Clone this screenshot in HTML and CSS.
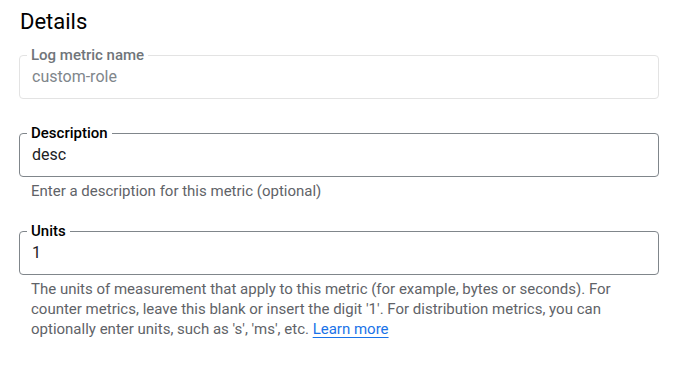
FILE: index.html
```html
<!DOCTYPE html>
<html lang="en">
<head>
    <meta charset="UTF-8">
    <title>Details</title>
    <link rel="stylesheet" href="styles.css">
</head>
<body>
    <div class="container">
        <h2>Details</h2>
        <fieldset class="field disabled">
            <legend>Log metric name</legend>
            <div class="value">custom-role</div>
        </fieldset>
        <fieldset class="field">
            <legend>Description</legend>
            <div class="value">desc</div>
        </fieldset>
        <div class="hint">Enter a description for this metric (optional)</div>
        <fieldset class="field">
            <legend>Units</legend>
            <div class="value">1</div>
        </fieldset>
        <div class="hint">The units of measurement that apply to this metric (for example, bytes or seconds). For counter metrics, leave this blank or insert the digit '1'. For distribution metrics, you can optionally enter units, such as 's', 'ms', etc. <a href="#">Learn more</a></div>
    </div>
</body>
</html>
```

FILE: styles.css
```css
body {
    margin: 0;
    padding: 0;
    font-family: Roboto, 'Noto Sans', Arial, sans-serif;
    color: #202124;
    background: #fff;
}
.container {
    width: 640px;
    padding: 8px 0 0 19px;
}
h2 {
    margin: 0 0 11px 1px;
    font-size: 22px;
    font-weight: 400;
    line-height: 28px;
    color: #000;
}
.field {
    margin: 0;
    padding: 0 12px 9px;
    border: 1px solid #80868b;
    border-radius: 4px;
    min-width: 0;
}
.field legend {
    margin-left: -5px;
    padding: 0 4px;
    font-size: 15px;
    font-weight: 500;
    line-height: 16px;
    color: #000;
}
.field .value {
    padding-top: 2px;
    font-size: 16px;
    line-height: 24px;
    color: #202124;
}
.field.disabled {
    border-color: #e3e3e3;
    margin-bottom: 26px;
}
.field.disabled legend {
    color: #70757a;
}
.field.disabled .value {
    color: #80868b;
}
.hint {
    margin: 4px 0 22px;
    padding: 0 12px;
    font-size: 15px;
    line-height: 20px;
    color: #5f6368;
}
.hint a {
    color: #1a73e8;
    text-decoration: underline;
    text-underline-offset: 3px;
}
```
